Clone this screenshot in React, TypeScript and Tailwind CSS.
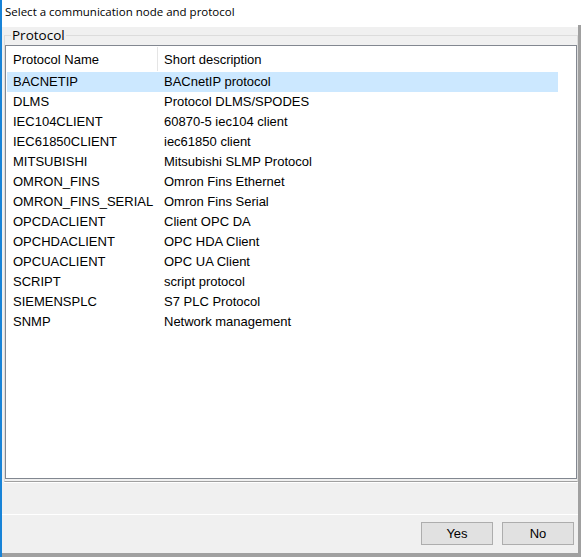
import React from 'react';

const ROWS: [string, string][] = [
  ['BACNETIP', 'BACnetIP protocol'],
  ['DLMS', 'Protocol DLMS/SPODES'],
  ['IEC104CLIENT', '60870-5 iec104 client'],
  ['IEC61850CLIENT', 'iec61850 client'],
  ['MITSUBISHI', 'Mitsubishi SLMP Protocol'],
  ['OMRON_FINS', 'Omron Fins Ethernet'],
  ['OMRON_FINS_SERIAL', 'Omron Fins Serial'],
  ['OPCDACLIENT', 'Client OPC DA'],
  ['OPCHDACLIENT', 'OPC HDA Client'],
  ['OPCUACLIENT', 'OPC UA Client'],
  ['SCRIPT', 'script protocol'],
  ['SIEMENSPLC', 'S7 PLC Protocol'],
  ['SNMP', 'Network management'],
];

export default function App() {
  return (
    <div className="relative w-[581px] h-[557px] flex flex-col bg-white border-l-2 border-[#1883d7] text-black font-['Liberation_Sans',Arial,sans-serif]">
      {/* window shadow on the right */}
      <div className="absolute right-0 top-[25px] bottom-0 w-[3px] bg-[#a0a0a0]" />

      {/* Caption */}
      <div className="h-[27px] pl-[3px] pt-[4px] text-[11.5px] leading-[16px] font-['Open_Sans',sans-serif]">
        Select a communication node and protocol
      </div>

      <div className="flex-1 flex flex-col bg-[#f0f0f0] pr-[3px]">
        {/* Group box */}
        <fieldset className="ml-[2px] border border-[#dcdcdc] border-b-[#a0a0a0] px-0 pb-[2px] shadow-[0_1px_0_#ffffff]">
          <legend className="ml-[6px] px-[1px] text-[13.5px] leading-[16px] font-['Open_Sans',sans-serif]">Protocol</legend>
          <div className="mt-[2px] h-[434px] bg-white border border-[#828790] text-[13px] flex flex-col pl-[1px]">
            {/* Header */}
            <div className="flex h-[26px] w-[551px] items-start pt-[1px]">
              <div className="w-[151px] h-[24px] flex items-center pl-[6px] border-r border-[#e5e5e5] pt-[1px]">Protocol Name</div>
              <div className="flex-1 h-[24px] flex items-center pl-[6px] pt-[1px]">Short description</div>
            </div>
            {ROWS.map(([name, desc], i) => (
              <div
                key={name}
                className={`flex h-[20px] w-[551px] items-center ${i === 0 ? 'bg-[#cce8ff]' : ''}`}
              >
                <div className="w-[151px] pl-[6px] whitespace-nowrap">{name}</div>
                <div className="flex-1 pl-[6px] whitespace-nowrap">{desc}</div>
              </div>
            ))}
          </div>
        </fieldset>

        <div className="h-[32px] mt-[1px] border-b border-white" />

        {/* Buttons */}
        <div className="flex-1 flex justify-end items-start pt-[7px] pr-[4px] gap-[9px]">
          <button className="w-[72px] h-[23px] bg-[#e1e1e1] border border-[#adadad] text-[13px]">Yes</button>
          <button className="w-[72px] h-[23px] bg-[#e1e1e1] border border-[#adadad] text-[13px]">No</button>
        </div>
        <div className="h-[4px] bg-[#a0a0a0]" />
      </div>
    </div>
  );
}
